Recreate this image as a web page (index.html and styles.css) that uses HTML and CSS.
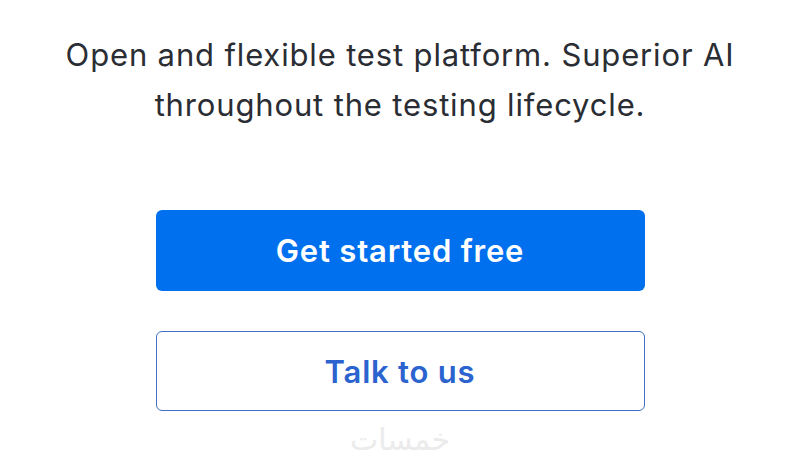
FILE: index.html
```html
<!DOCTYPE html>
<html>
<head>
<meta charset="utf-8">
<link rel="stylesheet" href="styles.css">
</head>
<body>
<main class="hero">
  <p class="lead">Open and flexible test platform. Superior AI<br>throughout the testing lifecycle.</p>
  <div class="actions">
    <a class="btn btn-primary">Get started free</a>
    <a class="btn btn-outline">Talk to us</a>
  </div>
  <div class="watermark">خمسات</div>
</main>
</body>
</html>
```
FILE: styles.css
```css
html, body {
  margin: 0;
  padding: 0;
  background: #ffffff;
}
body {
  width: 800px;
  height: 460px;
  overflow: hidden;
  font-family: Inter, "Noto Sans", sans-serif;
}
.hero {
  display: flex;
  flex-direction: column;
  align-items: center;
  padding-top: 30px;
}
.lead {
  margin: 0;
  text-align: center;
  font-size: 31px;
  letter-spacing: 0.85px;
  line-height: 50px;
  color: #2a2d33;
  font-weight: 400;
}
.actions {
  display: flex;
  flex-direction: column;
  gap: 40px;
  margin-top: 80px;
  width: 489px;
}
.btn {
  display: flex;
  align-items: center;
  justify-content: center;
  height: 81px;
  box-sizing: border-box;
  border-radius: 6px;
  font-size: 31px;
  letter-spacing: 0.8px;
  font-weight: 600;
  text-decoration: none;
}
.btn-primary {
  background: #0070ee;
  color: #ffffff;
}
.btn-outline {
  height: 80px;
  border: 1.5px solid #3f6fc6;
  color: #2b63cf;
  background: #fff;
}
.watermark {
  margin-top: 12px;
  font-family: "DejaVu Sans", sans-serif;
  font-size: 30px;
  color: #ebebeb;
  line-height: 34px;
}
```
